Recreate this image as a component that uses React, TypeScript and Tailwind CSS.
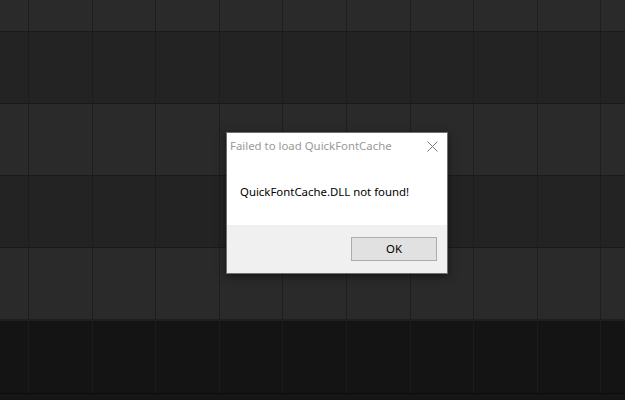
const rows = [
  { h: "h-[32px]", light: true },
  { h: "h-[72px]", light: false },
  { h: "h-[72px]", light: true },
  { h: "h-[72px]", light: false },
  { h: "h-[72px]", light: true },
];

const cols = Array.from({ length: 10 }, (_, i) => i);

const Row = ({ h, light }: { h: string; light: boolean }) => (
  <div
    className={`flex ${h} border-t border-[#1a1a1a] ${
      light ? "bg-[#2a2a2a]" : "bg-[#232323]"
    }`}
  >
    <div className="w-[28px] shrink-0" />
    {cols.map((c) => (
      <div
        key={c}
        className={`w-[63.6px] shrink-0 border-l ${
          light ? "border-dotted border-[#151515]" : "border-solid border-[#1d1d1d]"
        }`}
      />
    ))}
  </div>
);

export default function App() {
  return (
    <div
      className="relative h-[400px] w-[625px] overflow-hidden bg-[#141414]"
      style={{ fontFamily: '"Segoe UI", "Noto Sans", "Liberation Sans", sans-serif' }}
    >
      <div className="-mt-px">
        {rows.map((r, i) => (
          <Row key={i} h={r.h} light={r.light} />
        ))}
      </div>
      <div className="flex h-[80px] flex-col border-t-2 border-[#1f1f1f]">
        <div className="flex flex-1">
          <div className="w-[28px] shrink-0" />
          {cols.map((c) => (
            <div key={c} className="w-[63.6px] shrink-0 border-l border-[#1b1b1b]" />
          ))}
        </div>
        <div className="h-[6px] border-t border-[#0c0c0c] bg-[#161616]" />
      </div>

      {/* message box */}
      <div className="absolute left-[226px] top-[132px] flex h-[142px] w-[222px] flex-col border border-[#6f6f6f] bg-white shadow-[0_2px_8px_rgba(0,0,0,0.5)]">
        <div className="flex h-[26px] items-center justify-between pl-[3px] pr-[9px]">
          <span className="text-[11.4px] text-[#9a9a9a]">Failed to load QuickFontCache</span>
          <svg width="11" height="11" viewBox="0 0 11 11" className="text-[#7a7a7a]">
            <path d="M0.5 0.5 L10.5 10.5 M10.5 0.5 L0.5 10.5" stroke="currentColor" strokeWidth="1" />
          </svg>
        </div>
        <div className="flex h-[66px] items-center pl-[13px]">
          <span className="text-[11.4px] text-black">QuickFontCache.DLL not found!</span>
        </div>
        <div className="flex flex-1 items-start justify-end bg-[#f0f0f0] pr-[10px] pt-[12px]">
          <button className="flex h-[24px] w-[86px] items-center justify-center border border-[#adadad] bg-[#e1e1e1] text-[11.4px] text-black">
            OK
          </button>
        </div>
      </div>
    </div>
  );
}
